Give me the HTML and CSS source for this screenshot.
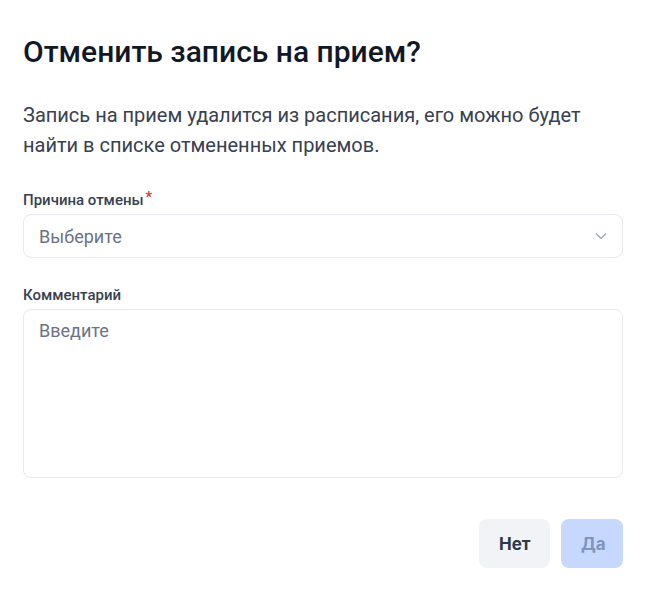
FILE: index.html
```html
<!DOCTYPE html>
<html lang="ru">
<head>
  <meta charset="UTF-8" />
  <title>Отменить запись</title>
  <link rel="stylesheet" href="styles.css">
</head>
<body>
  <div class="dialog">
    <h1 class="title">Отменить запись на прием?</h1>
    <p class="text">Запись на прием удалится из расписания, его можно будет найти в списке отмененных приемов.</p>

    <div class="field">
      <label class="label">Причина отмены<span class="req">*</span></label>
      <div class="select">
        <span class="placeholder">Выберите</span>
        <svg class="chevron" viewBox="0 0 12 8" width="12" height="8"><path d="M1 1.5l5 5 5-5" fill="none" stroke="#9aa1b2" stroke-width="1.2"/></svg>
      </div>
    </div>

    <div class="field">
      <label class="label">Комментарий</label>
      <div class="textarea"><span class="placeholder">Введите</span></div>
    </div>

    <div class="actions">
      <button class="btn btn-secondary">Нет</button>
      <button class="btn btn-primary" disabled>Да</button>
    </div>
  </div>
</body>
</html>
```
FILE: styles.css
```css
html, body {
  margin: 0;
  padding: 0;
  background: #fff;
  font-family: Roboto, 'Noto Sans', sans-serif;
  color: #111827;
}

.dialog {
  width: 600px;
  padding: 32px 24px 26px 23px;
}

.title {
  margin: 0;
  font-size: 30px;
  line-height: 40px;
  font-weight: 500;
  color: #111827;
}

.text {
  margin: 28px 0 30px;
  font-size: 20px;
  line-height: 30px;
  color: #374151;
}

.field {
  margin-bottom: 27px;
}

.label {
  display: block;
  font-size: 15px;
  line-height: 20px;
  font-weight: 500;
  color: #374151;
  margin-bottom: 4px;
}

.req {
  color: #e5312b;
  margin-left: 2px;
  position: relative;
  top: -3px;
}

.select {
  height: 42px;
  border: 1px solid #e8e8f2;
  border-radius: 8px;
  padding: 0 15px;
  display: flex;
  align-items: center;
  justify-content: space-between;
}

.placeholder {
  font-size: 18px;
  color: #6b7287;
}

.textarea {
  height: 148px;
  border: 1px solid #e8e8f2;
  border-radius: 8px;
  padding: 10px 15px 9px;
}

.actions {
  display: flex;
  justify-content: flex-end;
  gap: 11px;
  margin-top: 41px;
}

.btn {
  height: 49px;
  border: none;
  border-radius: 8px;
  font-family: Inter, sans-serif;
  font-size: 17px;
  font-weight: 700;
  padding: 0 20px;
}

.btn-secondary {
  width: 71px;
  background: #f2f3f7;
  color: #2d3748;
}

.btn-primary {
  width: 62px;
  background: #c6d8fd;
  color: #7e93bd;
}
```
